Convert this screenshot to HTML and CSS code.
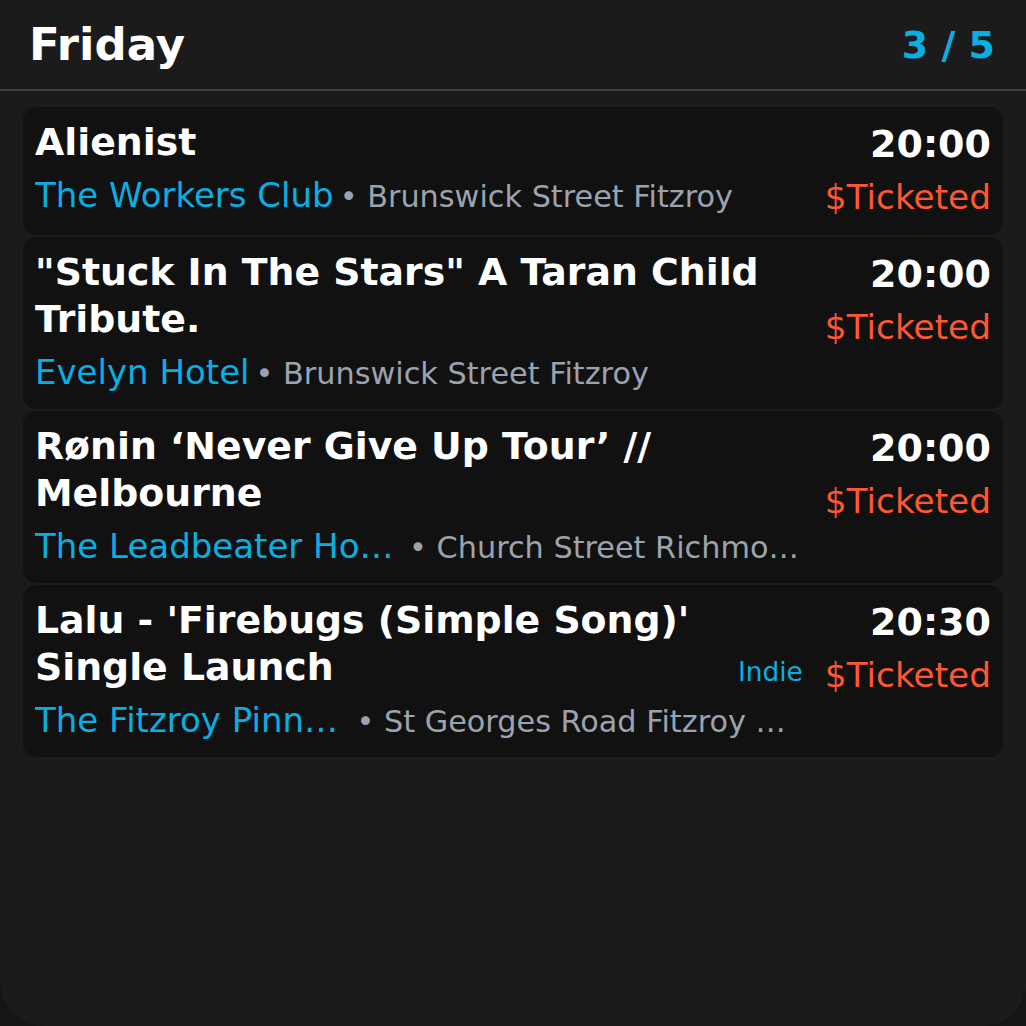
FILE: index.html
```html
<!DOCTYPE html>
<html lang="en">
<head>
<meta charset="utf-8">
<title>Friday</title>
<link rel="stylesheet" href="styles.css">
</head>
<body>
<div class="app">
  <header class="header">
    <h1 class="day">Friday</h1>
    <div class="pager">3 / 5</div>
  </header>
  <main class="list">
    <article class="card">
      <div class="main">
        <div class="title">Alienist</div>
        <div class="where">
          <span class="venue">The Workers Club</span>
          <span class="addr">• Brunswick Street Fitzroy</span>
        </div>
      </div>
      <div class="side">
        <div class="time">20:00</div>
        <div class="price-row"><span class="price">$Ticketed</span></div>
      </div>
    </article>
    <article class="card">
      <div class="main">
        <div class="title">"Stuck In The Stars" A Taran Child Tribute.</div>
        <div class="where">
          <span class="venue">Evelyn Hotel</span>
          <span class="addr">• Brunswick Street Fitzroy</span>
        </div>
      </div>
      <div class="side">
        <div class="time">20:00</div>
        <div class="price-row"><span class="price">$Ticketed</span></div>
      </div>
    </article>
    <article class="card">
      <div class="main">
        <div class="title">Rønin ‘Never Give Up Tour’ // Melbourne</div>
        <div class="where">
          <span class="venue">The Leadbeater Hotel</span>
          <span class="addr">• Church Street Richmond</span>
        </div>
      </div>
      <div class="side">
        <div class="time">20:00</div>
        <div class="price-row"><span class="price">$Ticketed</span></div>
      </div>
    </article>
    <article class="card">
      <div class="main">
        <div class="title">Lalu - 'Firebugs (Simple Song)' Single Launch</div>
        <div class="where">
          <span class="venue">The Fitzroy Pinnacle</span>
          <span class="addr">• St Georges Road Fitzroy North</span>
        </div>
      </div>
      <div class="side">
        <div class="time">20:30</div>
        <div class="price-row"><span class="tag">Indie</span><span class="price">$Ticketed</span></div>
      </div>
    </article>
  </main>
</div>
</body>
</html>
```

FILE: styles.css
```css
html, body {
  margin: 0;
  padding: 0;
  background: #151515;
}

body {
  font-family: "DejaVu Sans", "Noto Sans", sans-serif;
  color: #ffffff;
}

.app {
  height: 1026px;
  background: #1b1b1b;
  border-radius: 0 0 44px 44px;
  overflow: hidden;
}

.header {
  height: 89px;
  border-bottom: 2px solid #3a3e46;
  display: flex;
  align-items: center;
  justify-content: space-between;
  padding: 0 31px 0 29px;
}

.day {
  margin: 0;
  font-size: 45px;
  font-weight: bold;
  line-height: 52px;
  color: #ffffff;
}

.pager {
  font-size: 38px;
  font-weight: bold;
  line-height: 42px;
  color: #0aafe2;
}

.list {
  padding: 16px 23px 0;
  display: flex;
  flex-direction: column;
  gap: 2px;
}

.card {
  background: #111111;
  border-radius: 14px;
  padding: 12px;
  display: flex;
  gap: 18px;
}

.main {
  flex: 1 1 auto;
  min-width: 0;
}

.title {
  font-size: 37.8px;
  font-weight: bold;
  line-height: 47px;
  color: #ffffff;
}

.where {
  display: flex;
  align-items: baseline;
  height: 50px;
  margin-top: 4px;
  line-height: 50px;
  white-space: nowrap;
}

.venue {
  flex: 0 1 auto;
  min-width: 0;
  overflow: hidden;
  text-overflow: ellipsis;
  font-size: 34px;
  color: #0aafe2;
}

.addr {
  flex: 0 1 auto;
  min-width: 0;
  margin-left: 6px;
  overflow: hidden;
  text-overflow: ellipsis;
  font-size: 30.3px;
  color: #9ca3af;
}

.side {
  flex: 0 0 auto;
  display: flex;
  flex-direction: column;
  align-items: flex-end;
  white-space: nowrap;
}

.time {
  font-size: 38px;
  font-weight: bold;
  line-height: 50px;
  color: #ffffff;
}

.price-row {
  position: relative;
  margin-top: 2px;
  font-size: 34.3px;
  line-height: 52px;
}

.price {
  color: #ff5733;
}

.tag {
  position: absolute;
  right: 100%;
  top: 0;
  margin-right: 22px;
  font-size: 26.4px;
  line-height: 45px;
  color: #0aafe2;
}
```
